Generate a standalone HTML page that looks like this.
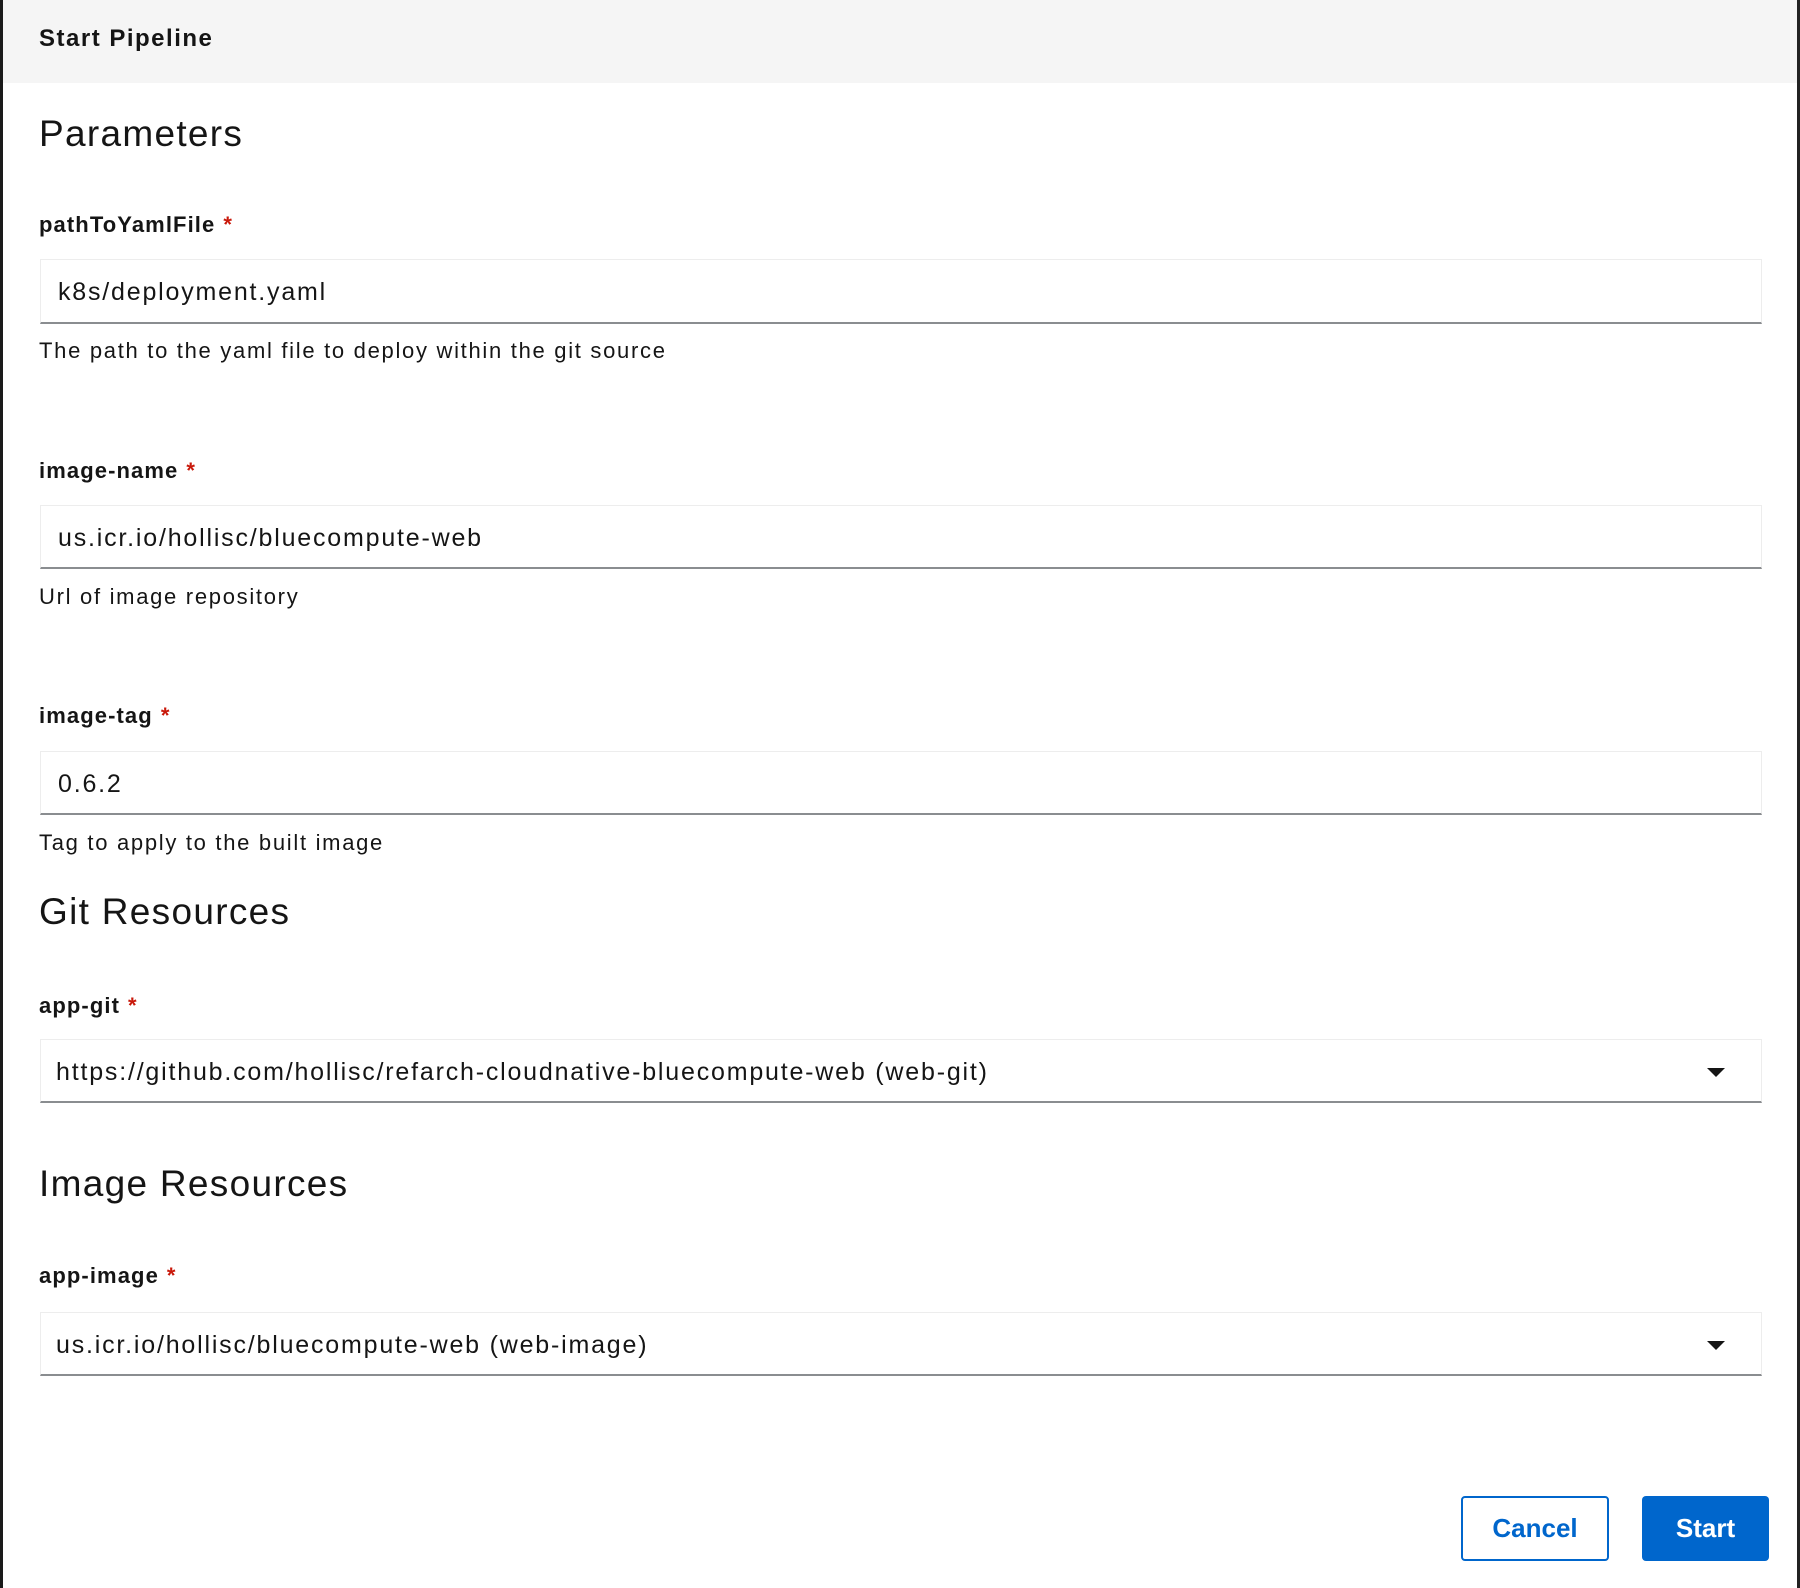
<!DOCTYPE html>
<html><head><meta charset="utf-8"><style>
*{margin:0;padding:0;box-sizing:border-box}
body{width:1800px;height:1588px;background:#fff;font-family:"Liberation Sans",sans-serif;color:#151515;position:relative;overflow:hidden}
.a{position:absolute;line-height:1;white-space:nowrap}
.hdr{position:absolute;left:0;top:0;width:1800px;height:83px;background:#f5f5f5}
.lb{position:absolute;left:0;top:0;width:3px;height:1588px;background:#1a1a1a}
.rb{position:absolute;right:0;top:0;width:3px;height:1588px;background:#222}
.h{font-size:37px;letter-spacing:1.3px}
.l{font-size:22px;font-weight:bold;letter-spacing:1.1px}
.l span{color:#c9190b;margin-left:8px}
.help{font-size:22px;letter-spacing:1.7px}
.in{position:absolute;left:40px;width:1722px;border:1px solid #ededed;border-bottom:2px solid #8a8d90;background:#fff}
.in .t{position:absolute;left:17px;font-size:25px;line-height:1;letter-spacing:1.8px;white-space:nowrap}
.arr{position:absolute;right:36px;width:0;height:0;border-left:9px solid transparent;border-right:9px solid transparent;border-top:9px solid #151515}
.btn{position:absolute;top:1496px;height:65px;border-radius:4px;font-size:26px;font-weight:bold;display:flex;align-items:center;justify-content:center}
</style></head><body>
<div class="hdr"></div>
<div class="lb"></div><div class="rb"></div>
<div class="a" style="left:39px;top:27px;font-size:24px;font-weight:bold;letter-spacing:1.5px">Start Pipeline</div>
<div class="a h" style="left:39px;top:115px">Parameters</div>

<div class="a l" style="left:39px;top:214px">pathToYamlFile<span>*</span></div>
<div class="in" style="top:259px;height:65px"><div class="t" style="top:20px">k8s/deployment.yaml</div></div>
<div class="a help" style="left:39px;top:340px">The path to the yaml file to deploy within the git source</div>

<div class="a l" style="left:39px;top:460px">image-name<span>*</span></div>
<div class="in" style="top:505px;height:64px"><div class="t" style="top:20px">us.icr.io/hollisc/bluecompute-web</div></div>
<div class="a help" style="left:39px;top:586px">Url of image repository</div>

<div class="a l" style="left:39px;top:705px">image-tag<span>*</span></div>
<div class="in" style="top:751px;height:64px"><div class="t" style="top:20px">0.6.2</div></div>
<div class="a help" style="left:39px;top:832px">Tag to apply to the built image</div>

<div class="a h" style="left:39px;top:893px">Git Resources</div>
<div class="a l" style="left:39px;top:995px">app-git<span>*</span></div>
<div class="in" style="top:1039px;height:64px"><div class="t" style="left:15px;top:20px">https://github.com/hollisc/refarch-cloudnative-bluecompute-web (web-git)</div><div class="arr" style="top:28px"></div></div>

<div class="a h" style="left:39px;top:1165px">Image Resources</div>
<div class="a l" style="left:39px;top:1265px">app-image<span>*</span></div>
<div class="in" style="top:1312px;height:64px"><div class="t" style="left:15px;top:20px">us.icr.io/hollisc/bluecompute-web (web-image)</div><div class="arr" style="top:28px"></div></div>

<div class="btn" style="left:1461px;width:148px;border:2px solid #06c;color:#06c;background:#fff">Cancel</div>
<div class="btn" style="left:1642px;width:127px;background:#06c;color:#fff">Start</div>
</body></html>
